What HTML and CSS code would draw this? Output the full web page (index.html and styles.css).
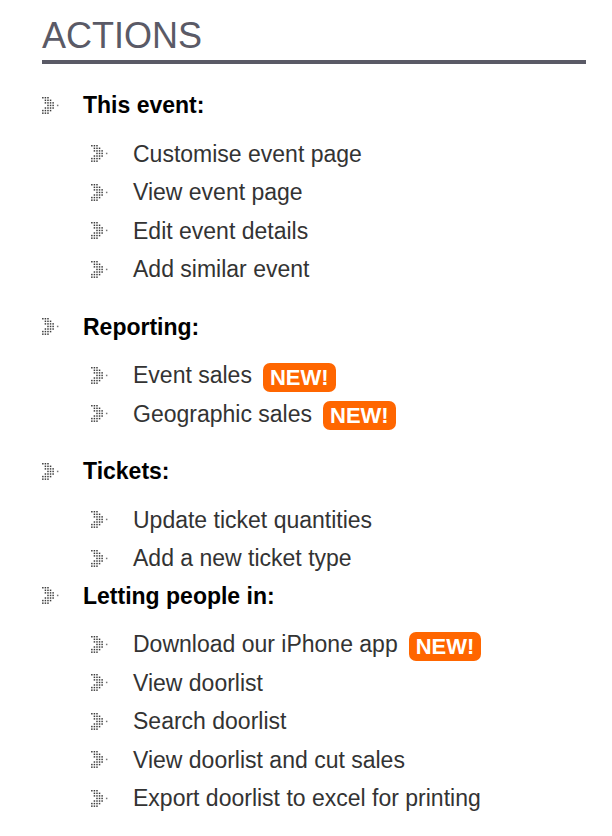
FILE: index.html
```html
<!DOCTYPE html>
<html lang="en">
<head>
<meta charset="utf-8">
<title>Actions</title>
<link rel="stylesheet" href="styles.css">
</head>
<body>
<svg class="defs" width="0" height="0" aria-hidden="true">
  <defs>
    <g id="dots">
      <rect x="0" y="0" width="1.5" height="1.5"/>
      <rect x="2.6" y="0" width="1.5" height="1.5"/>
      <rect x="5.2" y="0" width="1.5" height="1.5"/>
      <rect x="2.6" y="2.6" width="1.5" height="1.5"/>
      <rect x="5.2" y="2.6" width="1.5" height="1.5"/>
      <rect x="7.8" y="2.6" width="1.5" height="1.5"/>
      <rect x="2.6" y="5.2" width="1.5" height="1.5"/>
      <rect x="5.2" y="5.2" width="1.5" height="1.5"/>
      <rect x="7.8" y="5.2" width="1.5" height="1.5"/>
      <rect x="10.4" y="5.2" width="1.5" height="1.5"/>
      <rect x="5.2" y="7.8" width="1.5" height="1.5"/>
      <rect x="7.8" y="7.8" width="1.5" height="1.5"/>
      <rect x="10.4" y="7.8" width="1.5" height="1.5"/>
      <rect x="15" y="7.8" width="1.5" height="1.5" opacity="0.7"/>
      <rect x="2.6" y="10.4" width="1.5" height="1.5"/>
      <rect x="5.2" y="10.4" width="1.5" height="1.5"/>
      <rect x="7.8" y="10.4" width="1.5" height="1.5"/>
      <rect x="10.4" y="10.4" width="1.5" height="1.5"/>
      <rect x="0" y="13" width="1.5" height="1.5"/>
      <rect x="2.6" y="13" width="1.5" height="1.5"/>
      <rect x="5.2" y="13" width="1.5" height="1.5"/>
      <rect x="7.8" y="13" width="1.5" height="1.5"/>
      <rect x="0" y="15.6" width="1.5" height="1.5"/>
      <rect x="2.6" y="15.6" width="1.5" height="1.5"/>
      <rect x="5.2" y="15.6" width="1.5" height="1.5"/>
    </g>
  </defs>
</svg>

<div class="actions">
  <h2 class="title">ACTIONS</h2>
  <ul class="sections">
    <li class="section">
      <div class="section-head"><svg class="bullet" viewBox="0 0 17 17.2"><use href="#dots"/></svg><span>This event:</span></div>
      <ul class="items">
        <li class="item"><svg class="bullet" viewBox="0 0 17 17.2"><use href="#dots"/></svg><span>Customise event page</span></li>
        <li class="item"><svg class="bullet" viewBox="0 0 17 17.2"><use href="#dots"/></svg><span>View event page</span></li>
        <li class="item"><svg class="bullet" viewBox="0 0 17 17.2"><use href="#dots"/></svg><span>Edit event details</span></li>
        <li class="item"><svg class="bullet" viewBox="0 0 17 17.2"><use href="#dots"/></svg><span>Add similar event</span></li>
      </ul>
    </li>
    <li class="section">
      <div class="section-head"><svg class="bullet" viewBox="0 0 17 17.2"><use href="#dots"/></svg><span>Reporting:</span></div>
      <ul class="items">
        <li class="item"><svg class="bullet" viewBox="0 0 17 17.2"><use href="#dots"/></svg><span>Event sales</span><span class="badge">NEW!</span></li>
        <li class="item"><svg class="bullet" viewBox="0 0 17 17.2"><use href="#dots"/></svg><span>Geographic sales</span><span class="badge">NEW!</span></li>
      </ul>
    </li>
    <li class="section">
      <div class="section-head"><svg class="bullet" viewBox="0 0 17 17.2"><use href="#dots"/></svg><span>Tickets:</span></div>
      <ul class="items">
        <li class="item"><svg class="bullet" viewBox="0 0 17 17.2"><use href="#dots"/></svg><span>Update ticket quantities</span></li>
        <li class="item"><svg class="bullet" viewBox="0 0 17 17.2"><use href="#dots"/></svg><span>Add a new ticket type</span></li>
      </ul>
    </li>
    <li class="section section-tight">
      <div class="section-head"><svg class="bullet" viewBox="0 0 17 17.2"><use href="#dots"/></svg><span>Letting people in:</span></div>
      <ul class="items">
        <li class="item"><svg class="bullet" viewBox="0 0 17 17.2"><use href="#dots"/></svg><span>Download our iPhone app</span><span class="badge">NEW!</span></li>
        <li class="item"><svg class="bullet" viewBox="0 0 17 17.2"><use href="#dots"/></svg><span>View doorlist</span></li>
        <li class="item"><svg class="bullet" viewBox="0 0 17 17.2"><use href="#dots"/></svg><span>Search doorlist</span></li>
        <li class="item"><svg class="bullet" viewBox="0 0 17 17.2"><use href="#dots"/></svg><span>View doorlist and cut sales</span></li>
        <li class="item"><svg class="bullet" viewBox="0 0 17 17.2"><use href="#dots"/></svg><span>Export doorlist to excel for printing</span></li>
      </ul>
    </li>
  </ul>
</div>
</body>
</html>
```

FILE: styles.css
```css
html, body {
  margin: 0;
  padding: 0;
  background: #ffffff;
}

body {
  font-family: "Liberation Sans", Arial, Helvetica, sans-serif;
  color: #333333;
}

.defs {
  position: absolute;
  width: 0;
  height: 0;
  overflow: hidden;
}

.actions {
  padding: 15px 26px 0 42px;
}

.title {
  margin: 0;
  font-size: 36px;
  font-weight: normal;
  line-height: 41px;
  color: #5a5a66;
  padding-bottom: 4px;
  border-bottom: 4px solid #5a5a66;
}

.sections,
.items {
  list-style: none;
  margin: 0;
  padding: 0;
}

.sections {
  padding-top: 22px;
}

.section + .section {
  margin-top: 19px;
}

.section.section-tight {
  margin-top: -1px;
}

.section-head,
.item {
  display: flex;
  align-items: center;
  font-size: 23px;
  line-height: 38.5px;
  height: 38.5px;
}

.section-head {
  font-weight: bold;
  color: #000000;
}

.items {
  margin-top: 10px;
  padding-left: 49px;
}

.bullet {
  width: 17px;
  height: 17px;
  flex: none;
  fill: #3c3c3c;
  margin-right: 24px;
}

.item .bullet {
  margin-right: 25px;
}

.badge {
  margin-left: 11px;
  background: #ff6600;
  color: #ffffff;
  font-weight: bold;
  font-size: 22px;
  line-height: 29px;
  height: 29px;
  padding: 0 7px;
  border-radius: 7px;
  position: relative;
  top: 2px;
}
```
